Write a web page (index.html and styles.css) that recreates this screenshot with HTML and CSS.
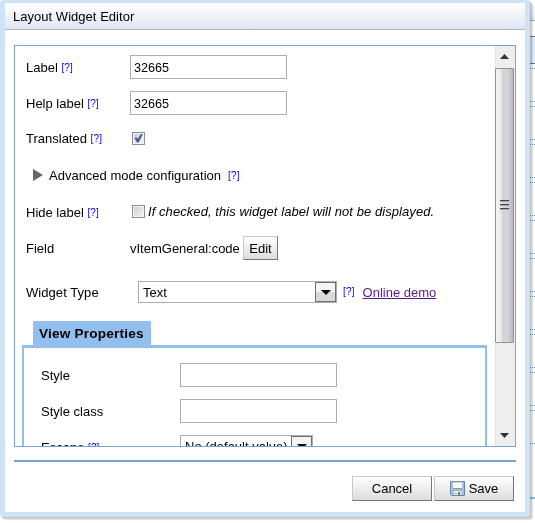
FILE: index.html
```html
<!DOCTYPE html>
<html lang="en">
<head>
<meta charset="utf-8">
<title>Layout Widget Editor</title>
<link rel="stylesheet" href="styles.css">
</head>
<body>
<div class="page">
<section class="dialog">
  <header class="title"><span class="t-title">Layout Widget Editor</span></header>
  <main class="body">
    <div class="scroller">
      <div class="form">
        <div class="row"><label class="name">Label <a class="help">[?]</a></label><div class="input">32665</div></div>
        <div class="row"><label class="name">Help label <a class="help">[?]</a></label><div class="input">32665</div></div>
        <div class="row translated"><label class="name">Translated <a class="help">[?]</a></label>
          <span class="check"><svg width="11" height="11" viewBox="0 0 11 11"><path d="M1.5 5 3.5 4.2 4.6 6 8 1 9.8 1 5.6 9.5 4 9.5Z" fill="#435aa0"/></svg></span></div>
        <div class="row advanced"><svg class="tri" width="10" height="12" viewBox="0 0 10 12"><path d="M0 0 10 6 0 12Z" fill="#666"/></svg><span class="t-adv">Advanced mode configuration</span> <a class="help">[?]</a></div>
        <div class="row"><label class="name">Hide label <a class="help">[?]</a></label><span class="check"></span><em class="t-note">If checked, this widget label will not be displayed.</em></div>
        <div class="row"><label class="name">Field</label><span class="t-field">vItemGeneral:code</span><button class="btn edit">Edit</button></div>
        <div class="row widget"><label class="name"><span class="t-widget">Widget Type</span></label>
          <div class="select type"><span>Text</span><i class="arrow"><svg width="10" height="5" viewBox="0 0 10 5"><path d="M0 0H10L5 5Z"/></svg></i></div>
          <a class="help">[?]</a><a class="demo">Online demo</a></div>
        <h2 class="tab"><span>View Properties</span></h2>
        <div class="props">
          <div class="row"><label class="name">Style</label><div class="input"></div></div>
          <div class="row"><label class="name">Style class</label><div class="input"></div></div>
          <div class="row"><label class="name">Escape <a class="help">[?]</a></label>
            <div class="select escape"><span>No (default value)</span><i class="arrow"><svg width="10" height="5" viewBox="0 0 10 5"><path d="M0 0H10L5 5Z"/></svg></i></div></div>
        </div>
      </div>
      <div class="bar">
        <svg class="up" width="9" height="5" viewBox="0 0 9 5"><path d="M0 5 4.5 0 9 5Z" fill="#333"/></svg>
        <div class="thumb"><i></i><i></i><i></i></div>
        <svg class="down" width="9" height="5" viewBox="0 0 9 5"><path d="M0 0H9L4.5 5Z" fill="#333"/></svg>
      </div>
    </div>
    <footer class="actions">
      <button class="btn"><span>Cancel</span></button>
      <button class="btn"><svg width="15" height="15" viewBox="0 0 15 15"><path d="M.5.5H14.5V14.5H1.5L.5 13.5Z" fill="#a9c0dc" stroke="#6584ad"/><path d="M3 1H12V7H3Z" fill="#f8f9f4"/><path d="M3 1H12" stroke="#9fae9c"/><path d="M3 7.5H12" stroke="#7897bd"/><path d="M4 10H11V14H4Z" fill="#eef0e9"/><path d="M4 9.5H11M4.5 12.5H7" stroke="#a5aa91"/><path d="M8 11H10V14H8Z" fill="#5678a8"/></svg><span>Save</span></button>
    </footer>
  </main>
</section>
<aside class="behind">
  <div class="b-top"></div><div class="b-gap"></div><div class="b-head"></div>
  <div class="b-row"></div><div class="b-row"></div><div class="b-row"></div><div class="b-row"></div><div class="b-row"></div><div class="b-row"></div><div class="b-row"></div><div class="b-row"></div><div class="b-row"></div><div class="b-row"></div>
  <div class="b-last"></div>
</aside>
</div>
</body>
</html>
```
FILE: styles.css
```css
* { box-sizing: border-box; }
body { margin: 0; background: #fff; color: #000; font: 13px/16px "Liberation Sans", Arial, sans-serif; overflow: hidden; }
.page { display: flex; width: 535px; height: 523px; background: #fff; }
.dialog { width: 530px; height: 517px; flex: none; background: #fff; border: 5px solid #d0e3f4; border-top-width: 3px; border-radius: 3px; box-shadow: 1px 1px 0 #c4c4c4, 2px 2px 0 #d0d0d0, 3px 3px 1px #e2e2e2; z-index: 1; }
.title { height: 27px; padding: 6px 8px; border-bottom: 1px solid #b3b3bb; background: linear-gradient(#fff, #e1e5f3); white-space: nowrap; }
.t-title { letter-spacing: .03px; }
.body { padding: 15px 9px 0; }
.scroller { display: flex; height: 402px; border: 1px solid #79a3d3; overflow: hidden; }
.form { width: 480px; padding: 3px 7px 0; flex: none; }
.row { display: flex; align-items: center; height: 36px; padding-left: 4px; white-space: nowrap; }
.name { width: 104px; flex: none; padding-top: 2px; }
.help { color: #00f; font-size: 10px; letter-spacing: .15px; position: relative; top: -1px; }
.input { width: 157px; height: 24px; border: 1px solid #abadb3; padding: 4px 3px; line-height: 16px; font-size: 12.6px; }
.translated { height: 35px; }
.translated .check { margin-top: -1px; }
.advanced { height: 38px; padding-left: 11px; }
.tri { margin: -1px 6px 0 0; }
.t-adv { padding-top: 2px; }
.advanced .help { margin-left: 7px; top: 1px; }
.check { width: 13px; height: 13px; margin: -1px 3px 0 2px; flex: none; border: 1px solid #8e8f8f; box-shadow: inset 0 0 0 1px #f4f4f4; background: linear-gradient(135deg, #c8ccd2, #f5f5f5); display: flex; }
.t-note { letter-spacing: .07px; }
.btn { font: inherit; color: #000; border: 1px solid; border-color: #c8c8c8 #777 #777 #c8c8c8; background: linear-gradient(#fff, #dcdcdc); padding: 0; display: flex; align-items: center; justify-content: center; gap: 4px; }
.edit { width: 35px; height: 24px; margin-left: 3px; padding-top: 1px; }
.t-field { display: inline-block; width: 110px; padding-top: 2px; }
.widget { height: 52px; }
.widget .name { width: 112px; }
.t-widget { letter-spacing: .06px; }
.select { display: flex; height: 22px; border: 1px solid #abadb3; padding-left: 4px; line-height: 21px; flex: none; }
.select span { flex: 1; }
.arrow { width: 21px; height: 20px; border: 1px solid #707070; background: linear-gradient(#f4f4f4 50%, #dadada 50%); display: flex; align-items: center; justify-content: center; }
.type { width: 199px; }
.widget .help { margin: 0 8px 0 6px; top: 0; }
.demo { color: #551a8b; text-decoration: underline; padding-top: 2px; }
.tab { margin: 3px 0 0 11px; width: 118px; height: 24px; padding: 4px 6px; background: #93bfee; font-size: 13.6px; letter-spacing: .2px; line-height: 17px; white-space: nowrap; }
.props { width: 465px; height: 200px; border: 2px solid #93bfee; border-top-width: 3px; padding: 9px 0 0 13px; }
.props .name { width: 139px; }
.escape { width: 133px; margin-top: -2px; }
.bar { width: 20px; height: 400px; flex: none; background: #eee; border-left: 1px solid #e2e2e2; display: flex; flex-direction: column; align-items: flex-start; }
.up { margin: 8px 0 9px 4px; flex: none; }
.thumb { width: 19px; height: 275px; margin-left: -1px; padding-bottom: 1px; flex: none; border: 1px solid #929292; border-radius: 1px; background: linear-gradient(90deg, #f4f4f4, #e8e8e8 35%, #d2d4d8 38%, #d4d4d8 70%, #b8b8bc); display: flex; flex-direction: column; align-items: center; justify-content: center; gap: 2px; }
.thumb i { width: 9px; height: 2px; border-top: 1px solid #444; border-bottom: 1px solid #aaa; }
.down { margin: 90px 0 0 4px; flex: none; }
.actions { display: flex; justify-content: flex-end; gap: 2px; margin-top: 13px; border-top: 2px solid #79a3d3; padding: 14px 2px 0 0; }
.actions .btn { width: 80px; height: 25px; }
.actions .btn span { padding-top: 1px; }
.behind { width: 5px; flex: none; z-index: 2; mix-blend-mode: multiply; }
.b-top { height: 21px; background: linear-gradient(#fff, #e6e9f5); border-bottom: 1px solid #aaa; }
.b-gap { height: 15px; }
.b-head { height: 28px; background: #dfebfb; border: 1px solid #777; border-width: 1px 0; }
.b-row { height: 34px; margin-top: 4px; border: 1px dotted #79a3d3; border-width: 1px 0; }
.b-last { height: 55px; border-bottom: 2px solid #93bfee; }
```
